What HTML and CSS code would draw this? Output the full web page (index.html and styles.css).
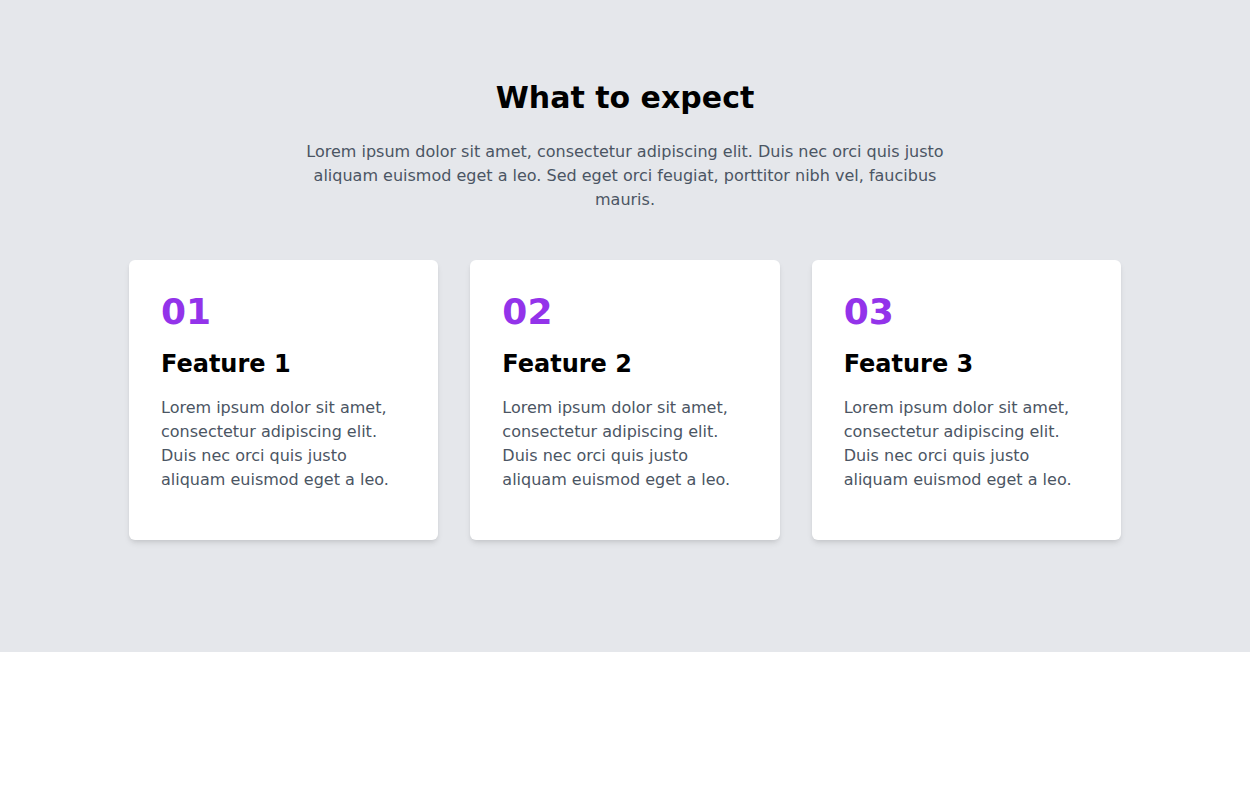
FILE: index.html
```html
<!DOCTYPE html>
<html>
<head>
  <title>What to expect</title>
  <link rel="stylesheet" href="styles.css">
</head>
<body>
  <section class="features">
    <div class="container">
      <h2 class="title">What to expect</h2>
      <p class="intro">Lorem ipsum dolor sit amet, consectetur adipiscing elit. Duis nec orci quis justo aliquam euismod eget a leo. Sed eget orci feugiat, porttitor nibh vel, faucibus mauris.</p>

      <div class="cards">
        <div class="card">
          <div class="num">01</div>
          <h3 class="card-title">Feature 1</h3>
          <p class="card-text">Lorem ipsum dolor sit amet, consectetur adipiscing elit. Duis nec orci quis justo aliquam euismod eget a leo.</p>
        </div>
        <div class="card">
          <div class="num">02</div>
          <h3 class="card-title">Feature 2</h3>
          <p class="card-text">Lorem ipsum dolor sit amet, consectetur adipiscing elit. Duis nec orci quis justo aliquam euismod eget a leo.</p>
        </div>
        <div class="card">
          <div class="num">03</div>
          <h3 class="card-title">Feature 3</h3>
          <p class="card-text">Lorem ipsum dolor sit amet, consectetur adipiscing elit. Duis nec orci quis justo aliquam euismod eget a leo.</p>
        </div>
      </div>
    </div>
  </section>
</body>
</html>
```

FILE: styles.css
```css
body {
  margin: 0;
  padding: 0;
  font-family: "DejaVu Sans", sans-serif;
  background-color: #ffffff;
}

.features {
  background-color: #e5e7eb;
  padding: 80px 0 112px;
}

.container {
  max-width: 1024px;
  margin: 0 auto;
  padding: 0 16px;
  box-sizing: border-box;
}

.title {
  margin: 0;
  font-size: 30px;
  line-height: 36px;
  font-weight: bold;
  text-align: center;
  color: #000000;
}

.intro {
  max-width: 672px;
  margin: 24px auto 0;
  font-size: 16px;
  line-height: 24px;
  text-align: center;
  color: #4b5563;
}

.cards {
  display: grid;
  grid-template-columns: repeat(3, 1fr);
  gap: 32px;
  margin-top: 48px;
}

.card {
  background-color: #ffffff;
  border-radius: 6px;
  padding: 32px 32px 48px;
  box-shadow: 0 4px 6px -1px rgba(0, 0, 0, 0.1), 0 2px 4px -1px rgba(0, 0, 0, 0.06);
}

.num {
  font-size: 36px;
  line-height: 40px;
  font-weight: bold;
  color: #9333ea;
}

.card-title {
  margin: 16px 0 0;
  font-size: 24px;
  line-height: 32px;
  font-weight: bold;
  color: #000000;
}

.card-text {
  margin: 16px 0 0;
  font-size: 16px;
  line-height: 24px;
  color: #4b5563;
}
```
